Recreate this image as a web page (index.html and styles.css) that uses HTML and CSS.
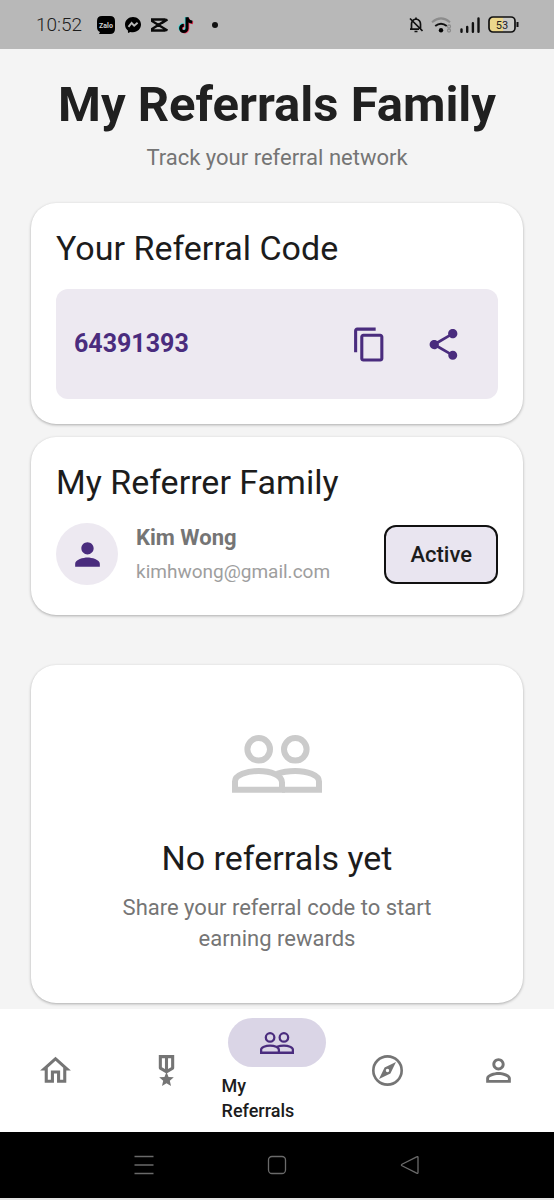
FILE: index.html
```html
<!DOCTYPE html>
<html lang="en">
<head>
<meta charset="utf-8">
<meta name="viewport" content="width=device-width, initial-scale=1">
<title>My Referrals Family</title>
<link rel="stylesheet" href="styles.css">
</head>
<body>
<svg class="defs" aria-hidden="true">
  <symbol id="people" viewBox="0 0 90 58">
    <g fill="none" stroke="currentColor" stroke-width="6">
      <circle cx="26.7" cy="14.3" r="11.3"/>
      <circle cx="63.3" cy="14.3" r="11.3"/>
      <path d="M3 54.8V46.5C3 40 15 36 26.7 36S50 40 50 47.5V54.8Z"/>
      <path d="M45 38.8C50 37 57 36 63.3 36 75 36 87 40 87 46.5V54.8H50"/>
    </g>
  </symbol>
</svg>
<div class="status">
  <div class="status-side">
    <span class="clock">10:52</span>
    <svg width="18" height="18" viewBox="0 0 18 18" aria-label="Zalo"><path d="M5 0h8q5 0 5 5v8q0 5-5 5H2l1-2Q0 15 0 11V5Q0 0 5 0z"/><text x="9" y="11.5" text-anchor="middle" class="zalo">Zalo</text></svg>
    <svg width="16" height="16" viewBox="0 0 16 16"><path d="M8 0C3.500 0 0 3.300 0 7.600c0 2.500 1.100 4.600 2.900 6L3 16l2.400-1.100c.8.2 1.700.3 2.600.3 4.500 0 8-3.300 8-7.600S12.500 0 8 0z"/><path d="M3.500 9.800 6.600 6l2.600 2.700L12.600 5.800" fill="none" stroke="#b8b8b8" stroke-width="1.900"/></svg>
    <svg width="17" height="14" viewBox="0 0 17 14"><path d="M16.500 1.500 11 5M16.500 12.500 1 3V1.500h12.500V3L1 11v1.500h12.500V11" fill="none" stroke="#0a0a0a" stroke-width="2.300"/></svg>
    <svg width="16" height="18" viewBox="0 0 16 18"><g fill="none" stroke-width="3"><path d="M8.200 1v11a3.200 3.200 0 1 1-3.200-3.400M8.200 1c.4 3 2.600 4.600 5.300 4.800" stroke="#3fd8d8"/><path d="M9.800 2v11a3.200 3.200 0 1 1-3.200-3.400M9.800 2c.4 3 2.600 4.600 5.300 4.800" stroke="#f0345a"/><path d="M9 1.200v11.300A3.200 3.200 0 1 1 5.800 9.200M9 1.200c.4 3 2.600 4.600 5.300 4.800" stroke="#000"/></g></svg>
    <i class="dot"></i>
  </div>
  <div class="status-side status-right">
    <svg width="14" height="16" viewBox="0 0 14 16"><path d="M2.500 12V7q0-4 4.500-5 4.500 1 4.500 5v5M1 12.200h9M1 1.500l12.500 12.500M7 .5V2M5.500 14.500h3" fill="none" stroke="#111" stroke-width="1.700"/></svg>
    <svg width="21" height="16" viewBox="0 0 21 16"><g fill="none" stroke-width="2"><path d="M1 5.200Q10-2.400 19 5.200" stroke="#8c8c8c"/><path d="M4.200 9Q10 4.400 15.800 9" stroke="#111"/></g><circle cx="10" cy="13.200" r="2.200"/><g fill="none" stroke="#8c8c8c" stroke-width="1.300"><circle cx="18" cy="9.500" r="1.500"/><circle cx="18" cy="13.500" r="1.500"/></g></svg>
    <svg width="20" height="16" viewBox="0 0 20 16"><path d="M1.500 14.800V12.500M7.200 14.800V10M12.900 14.800V6.200M18.500 14.800V1.500" stroke="#111" stroke-width="2.400" stroke-linecap="round"/></svg>
    <svg width="31" height="17" viewBox="0 0 31 17"><rect x="1" y="1" width="26" height="15" rx="4" fill="#c9c9c6"/><path d="M5 1h10v15H5q-4 0-4-4V5q0-4 4-4z" fill="#ecd78c"/><rect x="1" y="1" width="26" height="15" rx="4" fill="none" stroke="#111" stroke-width="1.700"/><path d="M29.500 6v5" stroke="#111" stroke-width="2"/><text x="14" y="12.500" text-anchor="middle" class="battery">53</text></svg>
  </div>
</div>

<main class="content">
  <header class="heading">
    <h1>My Referrals Family</h1>
    <p class="muted">Track your referral network</p>
  </header>

  <section class="card">
    <h2>Your Referral Code</h2>
    <div class="code-box">
      <span class="code">64391393</span>
      <button class="icon-btn" type="button" aria-label="Copy code"><svg width="37" height="37" viewBox="0 0 24 24" fill="currentColor"><path d="M16 1H4c-1.100 0-2 .9-2 2v14h2V3h12V1zm3 4H8c-1.100 0-2 .9-2 2v14c0 1.100.9 2 2 2h11c1.100 0 2-.9 2-2V7c0-1.100-.9-2-2-2zm0 16H8V7h11v14z"/></svg></button>
      <button class="icon-btn" type="button" aria-label="Share code"><svg width="37" height="37" viewBox="0 0 24 24" fill="currentColor"><path d="M18 16.080c-.76 0-1.440.3-1.960.77L8.910 12.700c.05-.23.09-.46.09-.7s-.04-.47-.09-.7l7.050-4.110c.54.5 1.250.81 2.040.81 1.660 0 3-1.340 3-3s-1.340-3-3-3-3 1.340-3 3c0 .24.04.47.09.7L8.040 9.810C7.500 9.310 6.790 9 6 9c-1.660 0-3 1.340-3 3s1.340 3 3 3c.79 0 1.500-.31 2.040-.81l7.120 4.160c-.05.21-.08.43-.08.65 0 1.610 1.310 2.920 2.920 2.920s2.920-1.310 2.920-2.920-1.310-2.920-2.920-2.920z"/></svg></button>
    </div>
  </section>

  <section class="card">
    <h2>My Referrer Family</h2>
    <div class="person">
      <span class="avatar"><svg width="37" height="37" viewBox="0 0 24 24" fill="currentColor"><path d="M12 12c2.210 0 4-1.790 4-4s-1.790-4-4-4-4 1.790-4 4 1.790 4 4 4zm0 2c-2.670 0-8 1.340-8 4v2h16v-2c0-2.660-5.330-4-8-4z"/></svg></span>
      <div class="person-text">
        <p class="name">Kim Wong</p>
        <p class="email">kimhwong@gmail.com</p>
      </div>
      <button class="chip" type="button">Active</button>
    </div>
  </section>

  <section class="card empty">
    <svg class="empty-icon"><use href="#people"/></svg>
    <h2>No referrals yet</h2>
    <p class="muted">Share your referral code to start earning rewards</p>
  </section>
</main>

<nav class="tabs">
  <a class="tab" href="#home" aria-label="Home"><svg width="37" height="37" viewBox="0 0 24 24" fill="currentColor"><path d="M12 5.690l5 4.500V18h-2v-6H9v6H7v-7.810l5-4.500M12 3L2 12h3v8h6v-6h2v6h6v-8h3L12 3z"/></svg></a>
  <a class="tab" href="#rewards" aria-label="Rewards"><svg width="37" height="37" viewBox="0 0 24 24" fill="currentColor"><path d="M17 10.430V2H7v8.430c0 .35.180.680.490.860l4.180 2.510-.99 2.340-3.410.29 2.590 2.240L9.070 22 12 20.230 14.930 22l-.78-3.330 2.590-2.240-3.410-.29-.99-2.340 4.180-2.510c.3-.18.480-.5.480-.86zM11 11.060l-2-1.200V4h2v7.060zm4-1.200l-2 1.200V4h2v5.860z"/></svg></a>
  <a class="tab tab-active" href="#referrals" aria-current="page"><span class="pill"><svg class="pill-icon"><use href="#people"/></svg></span><span class="tab-label">My Referrals</span></a>
  <a class="tab" href="#explore" aria-label="Explore"><svg width="37" height="37" viewBox="0 0 24 24"><circle cx="12" cy="12" r="9.200" fill="none" stroke="currentColor" stroke-width="1.700"/><path fill="currentColor" fill-rule="evenodd" d="M17.500 6.500l-3.600 7.400L6.500 17.500l3.600-7.400L17.500 6.500zM12 10.900a1.100 1.100 0 1 0 0 2.200 1.100 1.100 0 0 0 0-2.200z"/></svg></a>
  <a class="tab" href="#profile" aria-label="Profile"><svg width="37" height="37" viewBox="0 0 24 24" fill="currentColor"><path d="M12 5.900c1.160 0 2.100.94 2.100 2.100s-.94 2.100-2.100 2.100S9.900 9.160 9.900 8s.94-2.100 2.100-2.100m0 9c2.970 0 6.100 1.460 6.100 2.100v1.100H5.900V17c0-.64 3.130-2.100 6.100-2.100M12 4C9.790 4 8 5.790 8 8s1.790 4 4 4 4-1.790 4-4-1.790-4-4-4zm0 9c-2.670 0-8 1.340-8 4v3h16v-3c0-2.660-5.330-4-8-4z"/></svg></a>
</nav>

<div class="system">
  <button type="button" aria-label="Recent apps"><svg width="20" height="20" viewBox="0 0 20 20"><path d="M.5 1.500h19M.5 10h19M.5 18.500h19"/></svg></button>
  <button type="button" aria-label="Home screen"><svg width="20" height="20" viewBox="0 0 20 20"><rect x="1.500" y="1.500" width="17" height="17" rx="3.500"/></svg></button>
  <button type="button" aria-label="Back"><svg width="20" height="20" viewBox="0 0 20 20"><path d="M18 2.500v15q0 1.300-1.300.7L2 10.800q-1.200-.8 0-1.600L16.700 1.800Q18 1.200 18 2.500z"/></svg></button>
</div>
</body>
</html>
```

FILE: styles.css
```css
* {
  box-sizing: border-box;
}

body {
  margin: 0;
  min-height: 100vh;
  display: flex;
  flex-direction: column;
  background: #f4f4f4;
  color: #1c1c1c;
  font-family: Roboto, "Liberation Sans", sans-serif;
}

h1, h2, p {
  margin: 0;
}

button {
  font: inherit;
  color: inherit;
  padding: 0;
  border: 0;
  background: none;
}

svg {
  display: block;
  flex: none;
}

.defs {
  position: absolute;
  width: 0;
  height: 0;
}

/* Status bar */
.status {
  display: flex;
  justify-content: space-between;
  align-items: center;
  height: 49px;
  padding: 0 35px 0 36px;
  background: #b8b8b8;
}

.status-side {
  display: flex;
  align-items: center;
  gap: 10px;
}

.status-right {
  gap: 8px;
}

.clock {
  margin-right: 5px;
  font-size: 19px;
  font-weight: 300;
  line-height: 24px;
}

.dot {
  width: 6px;
  height: 6px;
  margin-left: 8px;
  border-radius: 50%;
  background: #111;
}

.zalo {
  fill: #d0d0d0;
  font-size: 7px;
  font-weight: 700;
}

.battery {
  fill: #222;
  font-size: 11px;
}

/* Page */
.content {
  flex: 1;
  display: flex;
  flex-direction: column;
  gap: 13px;
  padding: 26px 31px 6px;
}

.heading {
  display: flex;
  flex-direction: column;
  gap: 7px;
  margin-bottom: 17px;
  text-align: center;
}

h1 {
  font-size: 49px;
  line-height: 60px;
  font-weight: 700;
  color: #202020;
}

h2 {
  font-size: 34px;
  line-height: 40px;
  font-weight: 400;
}

.muted {
  font-size: 22px;
  line-height: 31px;
  color: #757575;
}

.card {
  padding: 25px;
  border-radius: 25px;
  background: #fff;
  box-shadow: 0 1px 3px rgba(0, 0, 0, 0.3);
}

.code-box {
  display: flex;
  align-items: center;
  margin-top: 21px;
  padding: 18px;
  border-radius: 12px;
  background: #ede9f1;
  color: #4a2c7e;
}

.code {
  flex: 1;
  font-size: 25px;
  line-height: 36px;
  font-weight: 700;
}

.icon-btn {
  display: grid;
  place-items: center;
  width: 74px;
  height: 74px;
}

.person {
  display: flex;
  align-items: center;
  min-height: 72px;
  margin-top: 16px;
}

.avatar {
  display: grid;
  place-items: center;
  width: 62px;
  height: 62px;
  border-radius: 50%;
  background: #ede9f1;
  color: #4a2c7e;
}

.person-text {
  flex: 1;
  display: flex;
  flex-direction: column;
  gap: 4px;
  margin-left: 18px;
}

.name {
  font-size: 22px;
  line-height: 32px;
  font-weight: 700;
  color: #757575;
}

.email {
  font-size: 19px;
  line-height: 28px;
  color: #9e9e9e;
}

.chip {
  padding: 12px 24px;
  border: 2px solid #111;
  border-radius: 12px;
  background: #e9e5f0;
  font-size: 22px;
  line-height: 31px;
  font-weight: 500;
}

.empty {
  display: flex;
  flex-direction: column;
  align-items: center;
  margin-top: 37px;
  padding: 70px 74px 49px;
  text-align: center;
}

.empty-icon {
  width: 90px;
  height: 58px;
  margin-bottom: 45px;
  color: #cbcbcb;
}

.empty h2 {
  margin-bottom: 14px;
}

/* Bottom navigation */
.tabs {
  display: grid;
  grid-template-columns: repeat(5, 1fr);
  background: #fff;
  min-height: 123px;
}

.tab {
  display: flex;
  flex-direction: column;
  align-items: center;
  justify-content: center;
  color: #757575;
  text-decoration: none;
}

.tab-active {
  gap: 6px;
  color: #1c1c1c;
}

.pill {
  display: grid;
  place-items: center;
  width: 98px;
  height: 49px;
  border-radius: 25px;
  background: #dad5e6;
  color: #4a2c7e;
}

.pill-icon {
  width: 34px;
  height: 22px;
}

.tab-label {
  width: 100%;
  padding-right: 24px;
  font-size: 18px;
  line-height: 25px;
  font-weight: 500;
}

/* System navigation */
.system {
  display: grid;
  grid-template-columns: repeat(3, 1fr);
  height: 68px;
  padding: 0 78px;
  border-bottom: 2px solid #e4e4e4;
  background: #000;
}

.system button {
  display: grid;
  place-items: center;
}

.system svg {
  fill: none;
  stroke: #6a6a6a;
  stroke-width: 1.3;
}
```
